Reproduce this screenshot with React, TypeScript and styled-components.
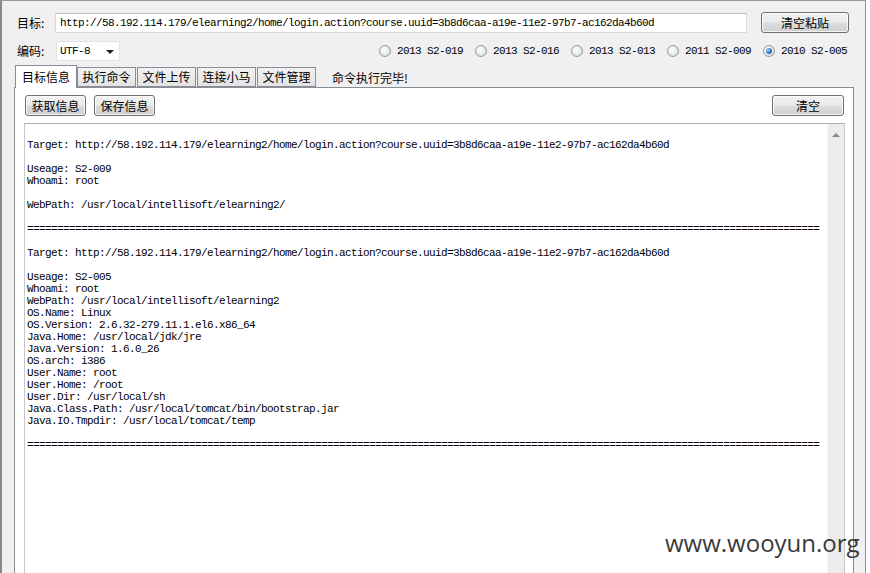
import React from "react";
import styled, { createGlobalStyle } from "styled-components";

const Global = createGlobalStyle`
  html, body { margin: 0; padding: 0; background: #ffffff; }
  body { font-family: "Noto Sans CJK SC", "Noto Sans", sans-serif; font-size: 12px; color: #000; }
  * { box-sizing: border-box; }
`;

const MONO = `"Liberation Mono", "DejaVu Sans Mono", monospace`;
const CJK = `"Noto Sans CJK SC", "Noto Sans", sans-serif`;

const Window = styled.div`
  position: relative;
  width: 866px;
  height: 573px;
  overflow: hidden;
  background: #f0f0f0;
  border-left: 2px solid #8a8a8a;
  border-top: 1px solid #9a9a9a;
  border-right: 1px solid #8e8e8e;
  display: flex;
  flex-direction: column;
  padding-top: 11px;
`;

const Row = styled.div<{ $top?: number }>`
  display: flex;
  align-items: center;
  height: 21px;
  margin-top: ${(p) => p.$top ?? 0}px;
`;

const Label = styled.span`
  font-family: ${CJK};
  font-size: 12px;
  width: 38px;
  margin-left: 15px;
  line-height: 14px;
  white-space: nowrap;
`;

const UrlInput = styled.div`
  width: 692px;
  height: 20px;
  background: #fff;
  border: 1px solid #d5d8de;
  border-top-color: #b8bcc4;
  font-family: ${MONO};
  font-size: 11px;
  letter-spacing: -0.6px;
  line-height: 18px;
  padding-left: 4px;
  white-space: nowrap;
  overflow: hidden;
`;

const Button = styled.button<{ $w: number; $gapLeft?: number }>`
  width: ${(p) => p.$w}px;
  height: 21px;
  margin-left: ${(p) => p.$gapLeft ?? 0}px;
  padding: 0;
  border: 1px solid #707070;
  border-radius: 3px;
  background: linear-gradient(#f2f2f2 0%, #ebebeb 48%, #dddddd 52%, #cfcfcf 100%);
  box-shadow: inset 0 0 0 1px rgba(255, 255, 255, 0.75);
  font-family: ${CJK};
  font-size: 12px;
  line-height: 17px;
  color: #000;
  flex: none;
`;

const Select = styled.div`
  width: 64px;
  height: 20px;
  margin-left: 1px;
  background: #fff;
  border: 1px solid #e2e3e6;
  display: flex;
  align-items: center;
  justify-content: space-between;
  padding: 0 5px 0 3px;
  font-family: ${MONO};
  font-size: 11px;
  letter-spacing: -0.6px;
`;

const Arrow = styled.span`
  width: 0;
  height: 0;
  border-left: 4px solid transparent;
  border-right: 4px solid transparent;
  border-top: 4px solid #222;
  margin-top: 2px;
`;

const RadioGroup = styled.div`
  margin-left: auto;
  margin-right: 18px;
  display: flex;
  gap: 12px;
`;

const RadioItem = styled.label`
  display: flex;
  align-items: center;
  gap: 6px;
  font-family: ${MONO};
  font-size: 11px;
  letter-spacing: -0.6px;
  white-space: nowrap;
`;

const RadioDot = styled.span<{ $on?: boolean }>`
  width: 12px;
  height: 12px;
  border-radius: 50%;
  border: 1px solid #9a9a9a;
  background: radial-gradient(circle at 40% 40%, #ffffff 0%, #e8e8e8 55%, #c8c8c8 100%);
  display: flex;
  align-items: center;
  justify-content: center;
  &::after {
    content: "";
    display: ${(p) => (p.$on ? "block" : "none")};
    width: 6px;
    height: 6px;
    border-radius: 50%;
    background: radial-gradient(circle at 35% 35%, #9fd3ff 0%, #2a79c9 55%, #103f7a 100%);
  }
`;

const TabStrip = styled.div`
  display: flex;
  align-items: flex-end;
  height: 22px;
  margin-top: 5px;
  padding-left: 13px;
  position: relative;
  z-index: 2;
  margin-bottom: -1px;
`;

const Tab = styled.div<{ $active?: boolean }>`
  font-family: ${CJK};
  font-size: 12px;
  white-space: nowrap;
  text-align: center;
  width: ${(p) => (p.$active ? 62 : 59)}px;
  height: ${(p) => (p.$active ? 23 : 20)}px;
  margin-right: ${(p) => (p.$active ? 0 : 1)}px;
  margin-bottom: ${(p) => (p.$active ? 0 : 1)}px;
  line-height: ${(p) => (p.$active ? 21 : 18)}px;
  border: 1px solid #898c95;
  border-bottom: ${(p) => (p.$active ? "none" : "1px solid #898c95")};
  background: ${(p) => (p.$active ? "#ffffff" : "linear-gradient(#f2f2f2, #e3e3e3)")};
`;

const Status = styled.span`
  font-family: ${CJK};
  font-size: 12px;
  margin-left: 15px;
  align-self: center;
`;

const Panel = styled.div`
  margin-left: 12px;
  width: 840px;
  height: 500px;
  flex: none;
  background: #ffffff;
  border: 1px solid #898c95;
  padding: 7px 9px 0 10px;
  display: flex;
  flex-direction: column;
`;

const ButtonRow = styled.div`
  display: flex;
  gap: 8px;
  height: 21px;
`;

const Spacer = styled.div`
  flex: 1;
`;

const Output = styled.div`
  margin-top: 7px;
  margin-left: -1px;
  width: 821px;
  flex: 1;
  border: 1px solid #c6c8cc;
  border-top-color: #abadb3;
  display: flex;
  background: #fff;
`;

const OutputText = styled.pre`
  flex: 1;
  margin: 0;
  padding: 3px 0 0 2px;
  font-family: ${MONO};
  font-size: 11px;
  letter-spacing: -0.6px;
  line-height: 12px;
  color: #000;
  overflow: hidden;
`;

const ScrollBar = styled.div`
  width: 17px;
  background: #ececec;
  border-left: 1px solid #f6f6f6;
  display: flex;
  justify-content: center;
  padding-top: 9px;
`;

const UpArrow = styled.span`
  width: 0;
  height: 0;
  border-left: 4px solid transparent;
  border-right: 4px solid transparent;
  border-bottom: 4px solid #8a8a8a;
`;

const Watermark = styled.div`
  position: absolute;
  left: 663px;
  top: 525px;
  font-family: "Open Sans", "Noto Sans", sans-serif;
  font-size: 24px;
  color: #3a3a3a;
  white-space: nowrap;
`;

const URL =
  "http://58.192.114.179/elearning2/home/login.action?course.uuid=3b8d6caa-a19e-11e2-97b7-ac162da4b60d";

const SEP = "=".repeat(132);

const outputLines = [
  "",
  `Target: ${URL}`,
  "",
  "Useage: S2-009",
  "Whoami: root",
  "",
  "WebPath: /usr/local/intellisoft/elearning2/",
  "",
  SEP,
  "",
  `Target: ${URL}`,
  "",
  "Useage: S2-005",
  "Whoami: root",
  "WebPath: /usr/local/intellisoft/elearning2",
  "OS.Name: Linux",
  "OS.Version: 2.6.32-279.11.1.el6.x86_64",
  "Java.Home: /usr/local/jdk/jre",
  "Java.Version: 1.6.0_26",
  "OS.arch: i386",
  "User.Name: root",
  "User.Home: /root",
  "User.Dir: /usr/local/sh",
  "Java.Class.Path: /usr/local/tomcat/bin/bootstrap.jar",
  "Java.IO.Tmpdir: /usr/local/tomcat/temp",
  "",
  SEP,
];

const radios = [
  { label: "2013 S2-019", on: false },
  { label: "2013 S2-016", on: false },
  { label: "2013 S2-013", on: false },
  { label: "2011 S2-009", on: false },
  { label: "2010 S2-005", on: true },
];

const tabs = ["目标信息", "执行命令", "文件上传", "连接小马", "文件管理"];

export default function App() {
  return (
    <>
      <Global />
      <Window>
        <Row>
          <Label>目标:</Label>
          <UrlInput>{URL}</UrlInput>
          <Button $w={88} $gapLeft={14}>
            清空粘贴
          </Button>
        </Row>
        <Row $top={8}>
          <Label>编码:</Label>
          <Select>
            <span>UTF-8</span>
            <Arrow />
          </Select>
          <RadioGroup>
            {radios.map((r) => (
              <RadioItem key={r.label}>
                <RadioDot $on={r.on} />
                {r.label}
              </RadioItem>
            ))}
          </RadioGroup>
        </Row>
        <TabStrip>
          {tabs.map((t, i) => (
            <Tab key={t} $active={i === 0}>
              {t}
            </Tab>
          ))}
          <Status>命令执行完毕!</Status>
        </TabStrip>
        <Panel>
          <ButtonRow>
            <Button $w={61}>获取信息</Button>
            <Button $w={61}>保存信息</Button>
            <Spacer />
            <Button $w={72}>清空</Button>
          </ButtonRow>
          <Output>
            <OutputText>{outputLines.join("\n")}</OutputText>
            <ScrollBar>
              <UpArrow />
            </ScrollBar>
          </Output>
        </Panel>
        <Watermark>www.wooyun.org</Watermark>
      </Window>
    </>
  );
}
